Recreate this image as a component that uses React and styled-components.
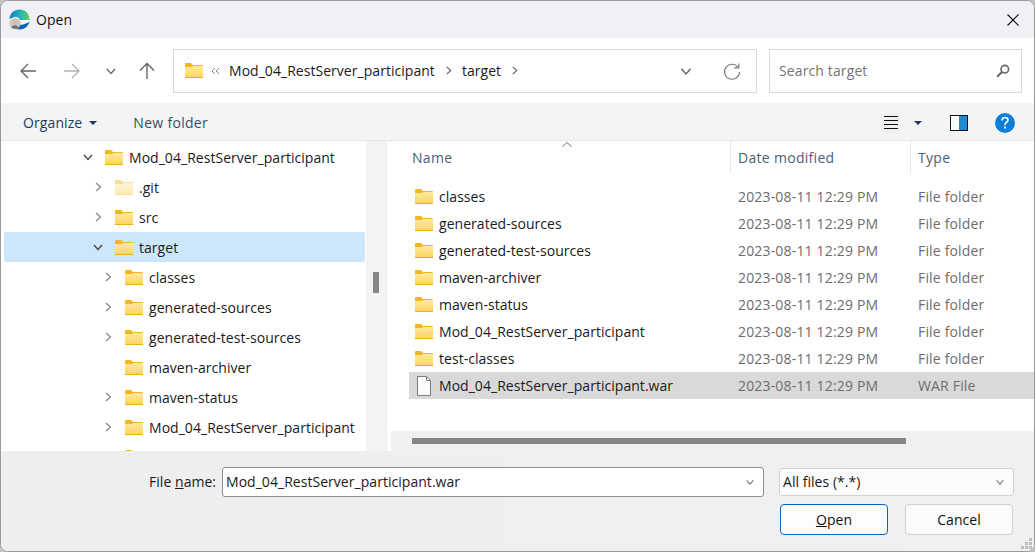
import React from "react";
import styled, { createGlobalStyle } from "styled-components";

const GlobalStyle = createGlobalStyle`
  html, body { margin: 0; padding: 0; background: #c4c4c4; }
  * { box-sizing: border-box; }
`;

const Window = styled.div`
  width: 1035px;
  height: 552px;
  display: flex;
  flex-direction: column;
  overflow: hidden;
  border: 1px solid #9a9a9a;
  border-radius: 8px;
  background: #fff;
  font-family: "Open Sans", "Noto Sans", sans-serif;
  font-size: 14px;
  letter-spacing: 0.04px;
  color: #1a1a1a;
`;

const TitleBar = styled.div`
  height: 37px;
  flex: none;
  display: flex;
  align-items: center;
  padding: 0 15px 0 8px;
  background: #f0f1f6;
`;

const Title = styled.span`
  margin-left: 6px;
  flex: 1;
  color: #111;
`;

const NavBar = styled.div`
  height: 65px;
  flex: none;
  display: flex;
  align-items: center;
  background: #fff;
`;

const NavButton = styled.div`
  width: ${(p) => p.$w}px;
  height: 30px;
  flex: none;
  display: flex;
  align-items: center;
  justify-content: center;
`;

const AddressBox = styled.div`
  width: 584px;
  height: 44px;
  margin-left: 13px;
  flex: none;
  display: flex;
  align-items: center;
  border: 1px solid #d9d9d9;
  padding: 0 0 0 11px;
`;

const Crumb = styled.span`
  margin-left: ${(p) => p.$gap || 0}px;
`;

const CrumbSpacer = styled.div`
  flex: 1;
`;

const SearchBox = styled.div`
  width: 253px;
  height: 44px;
  margin-left: 12px;
  flex: none;
  display: flex;
  align-items: center;
  justify-content: space-between;
  border: 1px solid #d9d9d9;
  padding: 0 11px 0 9px;
  color: #757575;
  letter-spacing: 0.12px;
`;

const ToolBar = styled.div`
  height: 38px;
  flex: none;
  display: flex;
  align-items: center;
  background: #f3f4f6;
  border-bottom: 1px solid #e6e6e6;
  padding: 2px 19px 0 22px;
  letter-spacing: 0.3px;
`;

const ToolButton = styled.span`
  display: flex;
  align-items: center;
  gap: 7px;
  margin-right: 36px;
  color: ${(p) => (p.$dark ? "#1f3a5c" : "#3c4c62")};
  letter-spacing: ${(p) => (p.$dark ? "0.1px" : "0.3px")};
`;

const ToolSpacer = styled.div`
  flex: 1;
`;

const ToolIcon = styled.div`
  height: 20px;
  margin-left: ${(p) => p.$gap}px;
  display: flex;
  align-items: center;
`;

const ViewIcon = styled(ToolIcon)`
  background: #eff0f2;
  padding: 0 3px;
  margin-right: -3px;
`;

const Main = styled.div`
  flex: 1;
  min-height: 0;
  display: flex;
`;

const TreePane = styled.div`
  width: 365px;
  flex: none;
  overflow: hidden;
  background: #fff;
  padding: 1px 1px 0 3px;
`;

const TreeRow = styled.div`
  height: 30px;
  display: flex;
  align-items: center;
  padding-left: ${(p) => p.$depth * 10 + 77}px;
  border-radius: 2px;
  background: ${(p) => (p.$selected ? "#cce6fb" : "transparent")};
  white-space: nowrap;
`;

const Twisty = styled.span`
  width: 13px;
  height: 12px;
  flex: none;
  display: flex;
  align-items: center;
  justify-content: center;
  margin-right: 11px;
`;

const RowLabel = styled.span`
  margin-left: 6px;
`;

const TreeTrack = styled.div`
  width: 20px;
  flex: none;
  background: #f3f3f3;
  padding: 131px 0 0 7px;
`;

const TreeThumb = styled.div`
  width: 6px;
  height: 21px;
  background: #858585;
`;

const PaneGap = styled.div`
  width: 5px;
  flex: none;
  background: #fff;
  border-left: 1px solid #f0f0f0;
`;

const ListPane = styled.div`
  flex: 1;
  min-width: 0;
  display: flex;
  flex-direction: column;
`;

const ListHeader = styled.div`
  height: 32px;
  flex: none;
  display: grid;
  grid-template-columns: 340px 180px 1fr;
  position: relative;
  color: #4c607a;
  letter-spacing: 0.3px;
`;

const HeaderCell = styled.div`
  display: flex;
  align-items: center;
  padding-left: ${(p) => p.$pad}px;
  border-right: ${(p) => (p.$line ? "1px solid #e5e5e5" : "none")};
`;

const SortCaret = styled.svg`
  position: absolute;
  left: 171px;
  top: 1px;
`;

const ListBody = styled.div`
  flex: 1;
  min-height: 0;
  padding: 10px 0 0 18px;
`;

const FileRow = styled.div`
  height: 27px;
  display: grid;
  grid-template-columns: 329px 180px 1fr;
  align-items: center;
  background: ${(p) => (p.$selected ? "#d9d9d9" : "transparent")};
  white-space: nowrap;
`;

const NameCell = styled.div`
  display: flex;
  align-items: center;
  padding-left: 6px;
`;

const MutedCell = styled.div`
  color: #6d6d6d;
  letter-spacing: 0.17px;
`;

const HScroll = styled.div`
  height: 20px;
  flex: none;
  background: #f0f0f0;
  padding: 7px 0 0 21px;
`;

const HThumb = styled.div`
  width: 494px;
  height: 6px;
  background: #858585;
`;

const Footer = styled.div`
  height: 100px;
  flex: none;
  background: linear-gradient(90deg, #eeeeee, #f0f0f0);
  padding: 16px 21px 0 148px;
  position: relative;
`;

const FieldRow = styled.div`
  display: flex;
  align-items: center;
  height: 29px;
`;

const FieldLabel = styled.span`
  width: 73px;
  flex: none;
`;

const Combo = styled.div`
  width: ${(p) => p.$w}px;
  height: ${(p) => p.$h}px;
  margin-left: ${(p) => p.$gap || 0}px;
  flex: none;
  display: flex;
  align-items: center;
  justify-content: space-between;
  padding: 0 8px 0 3px;
  background: ${(p) => (p.$soft ? "#fbfbfb" : "#fff")};
  border: 1px solid ${(p) => (p.$soft ? "#d2d2d2" : "#8f8f8f")};
  border-radius: 3px;
`;

const ButtonRow = styled.div`
  display: flex;
  justify-content: flex-end;
  gap: 17px;
  height: 31px;
  margin-top: 8px;
`;

const DialogButton = styled.button`
  width: 108px;
  height: 31px;
  font: inherit;
  letter-spacing: inherit;
  color: #111;
  background: ${(p) => (p.$primary ? "#fdfdfd" : "#fbfbfb")};
  border: 1px solid ${(p) => (p.$primary ? "#0067c0" : "#d0d0d0")};
  border-radius: 4px;
  padding: 0;
`;

const Grip = styled.svg`
  position: absolute;
  right: 1px;
  bottom: 1px;
`;

const Chevron = ({ dir = "right", color = "#8a8a8a", size = 12, width = 1.3 }) => {
  const paths = {
    right: "M4 2 L8.5 6 L4 10",
    down: "M2 4 L6 8.5 L10 4",
  };
  return (
    <svg width={size} height={size} viewBox="0 0 12 12" fill="none">
      <path d={paths[dir]} stroke={color} strokeWidth={width} />
    </svg>
  );
};

const Folder = ({ faded }) => (
  <svg width="18" height="15" viewBox="0 0 18 15" style={{ flex: "none", opacity: faded ? 0.45 : 1 }}>
    <path d="M0 1 Q0 0 1 0 H6 L8 2 H17 Q18 2 18 3 V5 H0 Z" fill="#f4b81c" />
    <defs>
      <linearGradient id="folderFill" x1="0" y1="0" x2="0" y2="1">
        <stop offset="0" stopColor="#ffe9a3" />
        <stop offset="1" stopColor="#fdd35a" />
      </linearGradient>
    </defs>
    <path d="M0 4 H7 L8.5 3 H18 V14 Q18 15 17 15 H1 Q0 15 0 14 Z" fill="url(#folderFill)" />
    <rect x="0" y="14" width="18" height="1" fill="#eeb021" />
  </svg>
);

const FileIcon = () => (
  <svg width="18" height="20" viewBox="0 0 18 20" style={{ flex: "none" }}>
    <path d="M2.5 .5 H11.5 L15.5 4.5 V19.5 H2.5 Z" fill="#fdfdfd" stroke="#7d7d7d" />
    <path d="M11.5 .5 V4.5 H15.5" fill="none" stroke="#7d7d7d" />
  </svg>
);

const EdgeLogo = () => (
  <svg width="21" height="21" viewBox="0 0 21 21" style={{ flex: "none" }}>
    <defs>
      <linearGradient id="edgeTop" x1="0" y1="0.5" x2="1" y2="0.5">
        <stop offset="0" stopColor="#0f7cc4" />
        <stop offset="0.55" stopColor="#27b5b8" />
        <stop offset="1" stopColor="#62d04e" />
      </linearGradient>
    </defs>
    <path d="M0.5 10 C1 4 5 0.5 10.5 0.5 C16 0.5 20.5 4.5 20.5 10 L20.5 11.5 H11 C10 8 7 7 4 8.5 Z" fill="url(#edgeTop)" />
    <path d="M10 11 H20.5 V12.5 C18 14 13 14 10 11 Z" fill="#fff" />
    <path d="M20.5 12.5 C19.5 17.5 15 20.5 10.5 20.5 L6 20 L9 15 C12 16.5 17 15.5 20.5 12.5 Z" fill="#0f63ad" />
    <circle cx="6" cy="14.5" r="5.5" fill="#cfc9c4" />
    <circle cx="6" cy="12.6" r="2.4" fill="#d9b9a6" />
    <path d="M2 18.5 Q6 13.5 10 18.5 Q6 21 2 18.5 Z" fill="#74706f" />
  </svg>
);

const treeRows = [
  { label: "Mod_04_RestServer_participant", depth: 0, open: true },
  { label: ".git", depth: 1, faded: true },
  { label: "src", depth: 1 },
  { label: "target", depth: 1, open: true, selected: true },
  { label: "classes", depth: 2 },
  { label: "generated-sources", depth: 2 },
  { label: "generated-test-sources", depth: 2 },
  { label: "maven-archiver", depth: 2, leaf: true },
  { label: "maven-status", depth: 2 },
  { label: "Mod_04_RestServer_participant", depth: 2 },
  { label: "", depth: 2, leaf: true },
];

const folders = [
  "classes",
  "generated-sources",
  "generated-test-sources",
  "maven-archiver",
  "maven-status",
  "Mod_04_RestServer_participant",
  "test-classes",
];

const STAMP = "2023-08-11 12:29 PM";

export default function App() {
  return (
    <Window>
      <GlobalStyle />
      <TitleBar>
        <EdgeLogo />
        <Title>Open</Title>
        <svg width="12" height="12" viewBox="0 0 12 12" fill="none">
          <path d="M.5 .5 L11.5 11.5 M11.5 .5 L.5 11.5" stroke="#111" strokeWidth="1.1" />
        </svg>
      </TitleBar>

      <NavBar>
        <NavButton $w={54}>
          <svg width="16" height="16" viewBox="0 0 16 16" fill="none">
            <path d="M16 8 H1 M8 1 L1 8 L8 15" stroke="#666" strokeWidth="1.4" />
          </svg>
        </NavButton>
        <NavButton $w={33}>
          <svg width="16" height="16" viewBox="0 0 16 16" fill="none">
            <path d="M0 8 H15 M8 1 L15 8 L8 15" stroke="#b2b2b2" strokeWidth="1.4" />
          </svg>
        </NavButton>
        <NavButton $w={45}>
          <Chevron dir="down" color="#666" />
        </NavButton>
        <NavButton $w={27}>
          <svg width="16" height="18" viewBox="0 0 16 18" fill="none">
            <path d="M8 17 V1.5 M1 8.5 L8 1.5 L15 8.5" stroke="#666" strokeWidth="1.4" />
          </svg>
        </NavButton>
        <AddressBox>
          <Folder />
          <svg width="10" height="8" viewBox="0 0 10 8" fill="none" style={{ marginLeft: 8 }}>
            <path d="M4 1 L1 4 L4 7 M8 1 L5 4 L8 7" stroke="#8a8a8a" strokeWidth="1" />
          </svg>
          <Crumb $gap={8}>Mod_04_RestServer_participant</Crumb>
          <Crumb $gap={8}><Chevron color="#666" size={11} /></Crumb>
          <Crumb $gap={8}>target</Crumb>
          <Crumb $gap={8}><Chevron color="#666" size={11} /></Crumb>
          <CrumbSpacer />
          <Chevron dir="down" color="#666" size={14} />
          <Crumb $gap={30}>
            <svg width="18" height="18" viewBox="0 0 18 18" fill="none" style={{ display: "block", marginTop: 3 }}>
              <path d="M15.2 4.5 A7.5 7.5 0 1 0 16.5 9" stroke="#808080" strokeWidth="1.2" />
              <path d="M11 4.8 H15.8 V0.5" stroke="#808080" strokeWidth="1.2" />
            </svg>
          </Crumb>
          <Crumb $gap={15} />
        </AddressBox>
        <SearchBox>
          Search target
          <svg width="14" height="14" viewBox="0 0 14 14" fill="none">
            <circle cx="8.8" cy="5.2" r="3.8" stroke="#666" strokeWidth="1.6" />
            <path d="M6 8 L1.2 12.8" stroke="#666" strokeWidth="2" />
          </svg>
        </SearchBox>
      </NavBar>

      <ToolBar>
        <ToolButton $dark>
          Organize
          <svg width="8" height="4" viewBox="0 0 8 4"><path d="M0 0 H8 L4 4 Z" fill="#1f3a5c" /></svg>
        </ToolButton>
        <ToolButton>New folder</ToolButton>
        <ToolSpacer />
        <ViewIcon $gap={0}>
          <svg width="14" height="13" viewBox="0 0 14 13">
            <path d="M0 .5 H14 M0 4.5 H14 M0 8.5 H14 M0 12.5 H14" stroke="#111" strokeWidth="1" />
          </svg>
        </ViewIcon>
        <ToolIcon $gap={16}>
          <svg width="8" height="4" viewBox="0 0 8 4"><path d="M0 0 H8 L4 4 Z" fill="#1f3a5c" /></svg>
        </ToolIcon>
        <ToolIcon $gap={28}>
          <svg width="18" height="16" viewBox="0 0 18 16">
            <rect x=".5" y=".5" width="17" height="15" fill="#fff" stroke="#111" />
            <rect x="9" y="1" width="8" height="14" fill="#1e8ad6" />
          </svg>
        </ToolIcon>
        <ToolIcon $gap={27}>
          <svg width="20" height="20" viewBox="0 0 20 20">
            <circle cx="10" cy="10" r="10" fill="#0d7fd8" />
            <path d="M7 7.5 Q7 4.5 10 4.5 Q13 4.5 13 7 Q13 8.7 11 9.7 Q10 10.3 10 12" fill="none" stroke="#fff" strokeWidth="1.6" />
            <rect x="9" y="13.5" width="2" height="2" fill="#fff" />
          </svg>
        </ToolIcon>
      </ToolBar>

      <Main>
        <TreePane>
          {treeRows.map((row, i) => (
            <TreeRow key={i} $depth={row.depth} $selected={row.selected}>
              <Twisty>
                {!row.leaf && (
                  <Chevron
                    dir={row.open ? "down" : "right"}
                    color={row.open ? "#444" : "#8a8a8a"}
                  />
                )}
              </Twisty>
              <Folder faded={row.faded} />
              <RowLabel>{row.label}</RowLabel>
            </TreeRow>
          ))}
        </TreePane>
        <TreeTrack>
          <TreeThumb />
        </TreeTrack>
        <PaneGap />
        <ListPane>
          <ListHeader>
            <HeaderCell $pad={21} $line>Name</HeaderCell>
            <HeaderCell $pad={7} $line>Date modified</HeaderCell>
            <HeaderCell $pad={7}>Type</HeaderCell>
            <SortCaret width="10" height="5" viewBox="0 0 10 5" fill="none">
              <path d="M.5 4.5 L5 .5 L9.5 4.5" stroke="#777" />
            </SortCaret>
          </ListHeader>
          <ListBody>
            {folders.map((name) => (
              <FileRow key={name}>
                <NameCell>
                  <Folder />
                  <RowLabel>{name}</RowLabel>
                </NameCell>
                <MutedCell>{STAMP}</MutedCell>
                <MutedCell>File folder</MutedCell>
              </FileRow>
            ))}
            <FileRow $selected>
              <NameCell>
                <FileIcon />
                <RowLabel>Mod_04_RestServer_participant.war</RowLabel>
              </NameCell>
              <MutedCell>{STAMP}</MutedCell>
              <MutedCell>WAR File</MutedCell>
            </FileRow>
          </ListBody>
          <HScroll>
            <HThumb />
          </HScroll>
        </ListPane>
      </Main>

      <Footer>
        <FieldRow>
          <FieldLabel>File <u>n</u>ame:</FieldLabel>
          <Combo $w={542} $h={30}>
            Mod_04_RestServer_participant.war
            <Chevron dir="down" color="#777" size={10} />
          </Combo>
          <Combo $w={235} $h={28} $gap={15} $soft>
            All files (*.*)
            <Chevron dir="down" color="#777" size={10} />
          </Combo>
        </FieldRow>
        <ButtonRow>
          <DialogButton $primary><u>O</u>pen</DialogButton>
          <DialogButton>Cancel</DialogButton>
        </ButtonRow>
        <Grip width="12" height="12" viewBox="0 0 12 12" fill="#bdbdbd">
          <rect x="8" y="0" width="3" height="3" />
          <rect x="4" y="4" width="3" height="3" />
          <rect x="8" y="4" width="3" height="3" />
          <rect x="0" y="8" width="3" height="3" />
          <rect x="4" y="8" width="3" height="3" />
          <rect x="8" y="8" width="3" height="3" />
        </Grip>
      </Footer>
    </Window>
  );
}
